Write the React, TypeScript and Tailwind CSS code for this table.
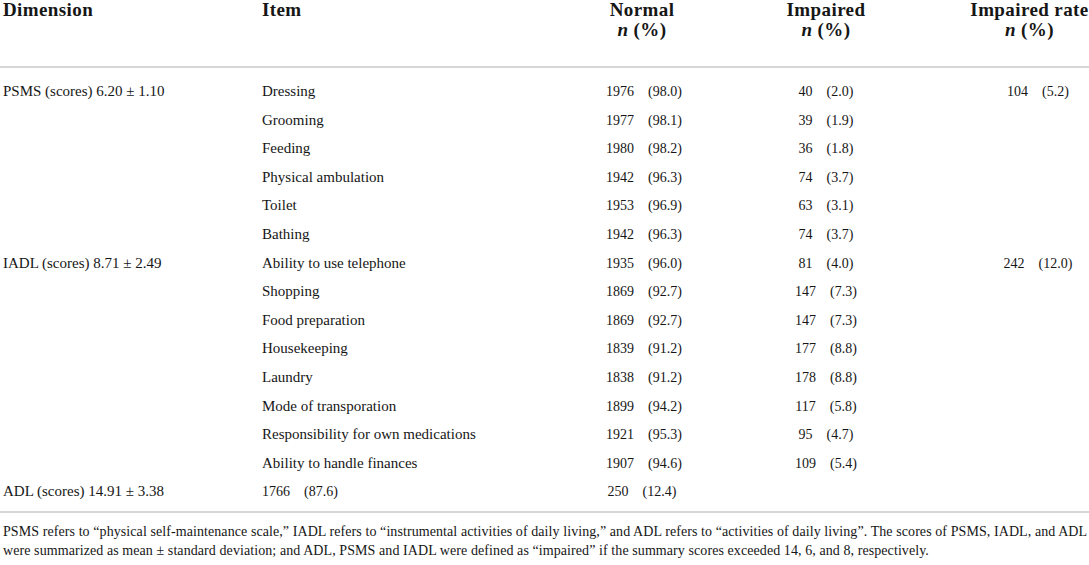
const rows = [
  { dim: "PSMS (scores) 6.20 ± 1.10", item: "Dressing", normal: ["1976", "(98.0)"], impaired: ["40", "(2.0)"], rate: ["104", "(5.2)"] },
  { dim: "", item: "Grooming", normal: ["1977", "(98.1)"], impaired: ["39", "(1.9)"] },
  { dim: "", item: "Feeding", normal: ["1980", "(98.2)"], impaired: ["36", "(1.8)"] },
  { dim: "", item: "Physical ambulation", normal: ["1942", "(96.3)"], impaired: ["74", "(3.7)"] },
  { dim: "", item: "Toilet", normal: ["1953", "(96.9)"], impaired: ["63", "(3.1)"] },
  { dim: "", item: "Bathing", normal: ["1942", "(96.3)"], impaired: ["74", "(3.7)"] },
  { dim: "IADL (scores) 8.71 ± 2.49", item: "Ability to use telephone", normal: ["1935", "(96.0)"], impaired: ["81", "(4.0)"], rate: ["242", "(12.0)"] },
  { dim: "", item: "Shopping", normal: ["1869", "(92.7)"], impaired: ["147", "(7.3)"] },
  { dim: "", item: "Food preparation", normal: ["1869", "(92.7)"], impaired: ["147", "(7.3)"] },
  { dim: "", item: "Housekeeping", normal: ["1839", "(91.2)"], impaired: ["177", "(8.8)"] },
  { dim: "", item: "Laundry", normal: ["1838", "(91.2)"], impaired: ["178", "(8.8)"] },
  { dim: "", item: "Mode of transporation", normal: ["1899", "(94.2)"], impaired: ["117", "(5.8)"] },
  { dim: "", item: "Responsibility for own medications", normal: ["1921", "(95.3)"], impaired: ["95", "(4.7)"] },
  { dim: "", item: "Ability to handle finances", normal: ["1907", "(94.6)"], impaired: ["109", "(5.4)"] },
];

const Num = ({ v }: { v?: string[] }) =>
  v ? (
    <span className="inline-flex gap-[14px] text-[14px]">
      <span>{v[0]}</span>
      <span>{v[1]}</span>
    </span>
  ) : null;

const Head = ({ title }: { title: string }) => (
  <div className="flex flex-col items-center whitespace-nowrap">
    <span>{title}</span>
    <span>
      <i>n</i> (%)
    </span>
  </div>
);

export default function App() {
  return (
    <div className="w-[1089px] h-[565px] overflow-hidden bg-white text-[#161616] font-[family-name:Liberation_Serif,serif]">
      {/* header */}
      <div className="grid grid-cols-[262px_300px_160px_208px_1fr] pb-[26px] text-[19px] leading-[20px] font-bold tracking-[0.4px] border-b-2 border-[#d6d6d6]">
        <div className="pl-[3px]">Dimension</div>
        <div>Item</div>
        <Head title="Normal" />
        <Head title="Impaired" />
        <div className="pl-[40px]">
          <Head title="Impaired rate" />
        </div>
      </div>

      {/* body */}
      <div className="pt-[9px] pb-[5px] border-b-2 border-[#d6d6d6] text-[15px]">
        {rows.map((r, i) => (
          <div key={i} className="grid grid-cols-[262px_300px_160px_208px_1fr] h-[28.6px] items-center">
            <div className="pl-[3px]">{r.dim}</div>
            <div>{r.item}</div>
            <div className="text-center pl-[4px]">
              <Num v={r.normal} />
            </div>
            <div className="text-center">
              <Num v={r.impaired} />
            </div>
            <div className="text-center pl-[57px]">
              <Num v={r.rate} />
            </div>
          </div>
        ))}
        <div className="grid grid-cols-[262px_300px_160px_208px_1fr] h-[28.6px] items-center">
          <div className="pl-[3px]">ADL (scores) 14.91 ± 3.38</div>
          <div>
            <Num v={["1766", "(87.6)"]} />
          </div>
          <div className="text-center">
            <Num v={["250", "(12.4)"]} />
          </div>
          <div />
          <div />
        </div>
      </div>

      {/* footnote */}
      <div className="pt-[9px] pl-[3px] text-[14px] leading-[19px] tracking-[0.08px]">
        <p className="whitespace-nowrap">
          PSMS refers to “physical self-maintenance scale,” IADL refers to “instrumental activities of daily living,” and ADL refers to “activities of daily living”. The scores of PSMS, IADL, and ADL
        </p>
        <p className="whitespace-nowrap">
          were summarized as mean ± standard deviation; and ADL, PSMS and IADL were defined as “impaired” if the summary scores exceeded 14, 6, and 8, respectively.
        </p>
      </div>
    </div>
  );
}
